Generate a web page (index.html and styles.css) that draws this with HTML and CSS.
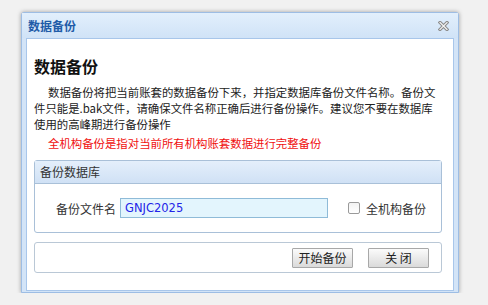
FILE: index.html
```html
<!DOCTYPE html>
<html lang="zh-CN">
<head>
    <meta charset="UTF-8">
    <title>数据备份</title>
    <link rel="stylesheet" href="styles.css">
</head>
<body>
    <div class="window">
        <div class="titlebar">
            <span class="title">数据备份</span>
            <svg class="close" width="11" height="10" viewBox="0 0 11 10">
                <path d="M2 1.5 L9 8.5 M9 1.5 L2 8.5" stroke="#8a8a8a" stroke-width="3.2" stroke-linecap="square"/>
                <path d="M2 1.5 L9 8.5 M9 1.5 L2 8.5" stroke="#f4f4f4" stroke-width="1.2" stroke-linecap="square"/>
            </svg>
        </div>
        <div class="content">
            <h1>数据备份</h1>
            <p class="desc">数据备份将把当前账套的数据备份下来，并指定数据库备份文件名称。备份文件只能是.bak文件，请确保文件名称正确后进行备份操作。建议您不要在数据库使用的高峰期进行备份操作</p>
            <p class="warn">全机构备份是指对当前所有机构账套数据进行完整备份</p>
            <div class="group">
                <div class="group-head">备份数据库</div>
                <div class="group-body">
                    <label class="field-label">备份文件名</label>
                    <input class="field-input" type="text" value="GNJC2025">
                    <label class="check"><span class="box"></span>全机构备份</label>
                </div>
            </div>
            <div class="actions">
                <button class="btn">开始备份</button>
                <button class="btn">关 闭</button>
            </div>
        </div>
    </div>
</body>
</html>
```

FILE: styles.css
```css
body {
    margin: 0;
    background: #f1f1f1;
    font-family: "Noto Sans CJK SC", "Liberation Sans", sans-serif;
    font-size: 12px;
    color: #222;
}
.window {
    margin: 12px 0 0 21px;
    width: 436px;
    height: 279px;
    border: 1px solid #9dbde4;
    border-radius: 3px 3px 0 0;
    background: #d3e4f7;
    box-shadow: 0 0 4px rgba(0, 0, 0, 0.35);
    display: flex;
    flex-direction: column;
}
.titlebar {
    height: 25px;
    display: flex;
    align-items: center;
    justify-content: space-between;
    padding: 0 9px 0 6px;
    background: linear-gradient(#e2effc, #d0e3f7);
}
.title {
    color: #1f5ca8;
    font-weight: bold;
    font-size: 12px;
}
.close {
    display: block;
}
.content {
    flex: 1;
    margin: 0 4px 1px 4px;
    border: 1px solid #a8c6ea;
    background: #fff;
    padding: 17px 11px 0 7px;
}
h1 {
    margin: 0;
    font-size: 16px;
    line-height: 20px;
    font-weight: bold;
    color: #111;
}
.desc {
    margin: 8px 0 0;
    font-size: 11.4px;
    line-height: 16px;
    text-indent: 14px;
    color: #222;
}
.warn {
    margin: 3px 0 0;
    font-size: 11.4px;
    line-height: 16px;
    padding-left: 14px;
    color: #f01010;
}
.group {
    margin-top: 9px;
    border: 1px solid #a9c0d8;
    border-radius: 3px;
}
.group-head {
    height: 22px;
    line-height: 22px;
    padding-left: 5px;
    border-bottom: 1px solid #a9c0d8;
    background: linear-gradient(#e4effb, #d0e1f5);
    color: #333;
}
.group-body {
    height: 48px;
    display: flex;
    align-items: center;
    padding-left: 21px;
}
.field-label {
    color: #333;
    width: 64px;
}
.field-input {
    box-sizing: border-box;
    width: 208px;
    height: 20px;
    margin: 0;
    border: 1px solid #8fbbd8;
    background: #e3f5fd;
    color: #2424e8;
    font-family: "DejaVu Sans", sans-serif;
    font-size: 11.5px;
    padding: 0 4px;
}
.check {
    display: flex;
    align-items: center;
    margin-left: 20px;
    color: #333;
}
.box {
    box-sizing: border-box;
    width: 12px;
    height: 12px;
    margin-right: 6px;
    border: 1px solid #9a9a9a;
    border-radius: 2px;
    background: linear-gradient(#f2f2f2, #ffffff);
}
.actions {
    margin-top: 9px;
    height: 29px;
    border: 1px solid #bac8d6;
    border-radius: 3px;
    display: flex;
    align-items: center;
    justify-content: flex-end;
    gap: 15px;
    padding-right: 12px;
}
.btn {
    box-sizing: border-box;
    width: 61px;
    height: 20px;
    margin: 0;
    padding: 0;
    border: 1px solid #a8a8a8;
    border-radius: 1px;
    background: linear-gradient(#fbfbfb, #dadada);
    font-family: "Noto Sans CJK SC", sans-serif;
    font-size: 12px;
    color: #222;
}
```
